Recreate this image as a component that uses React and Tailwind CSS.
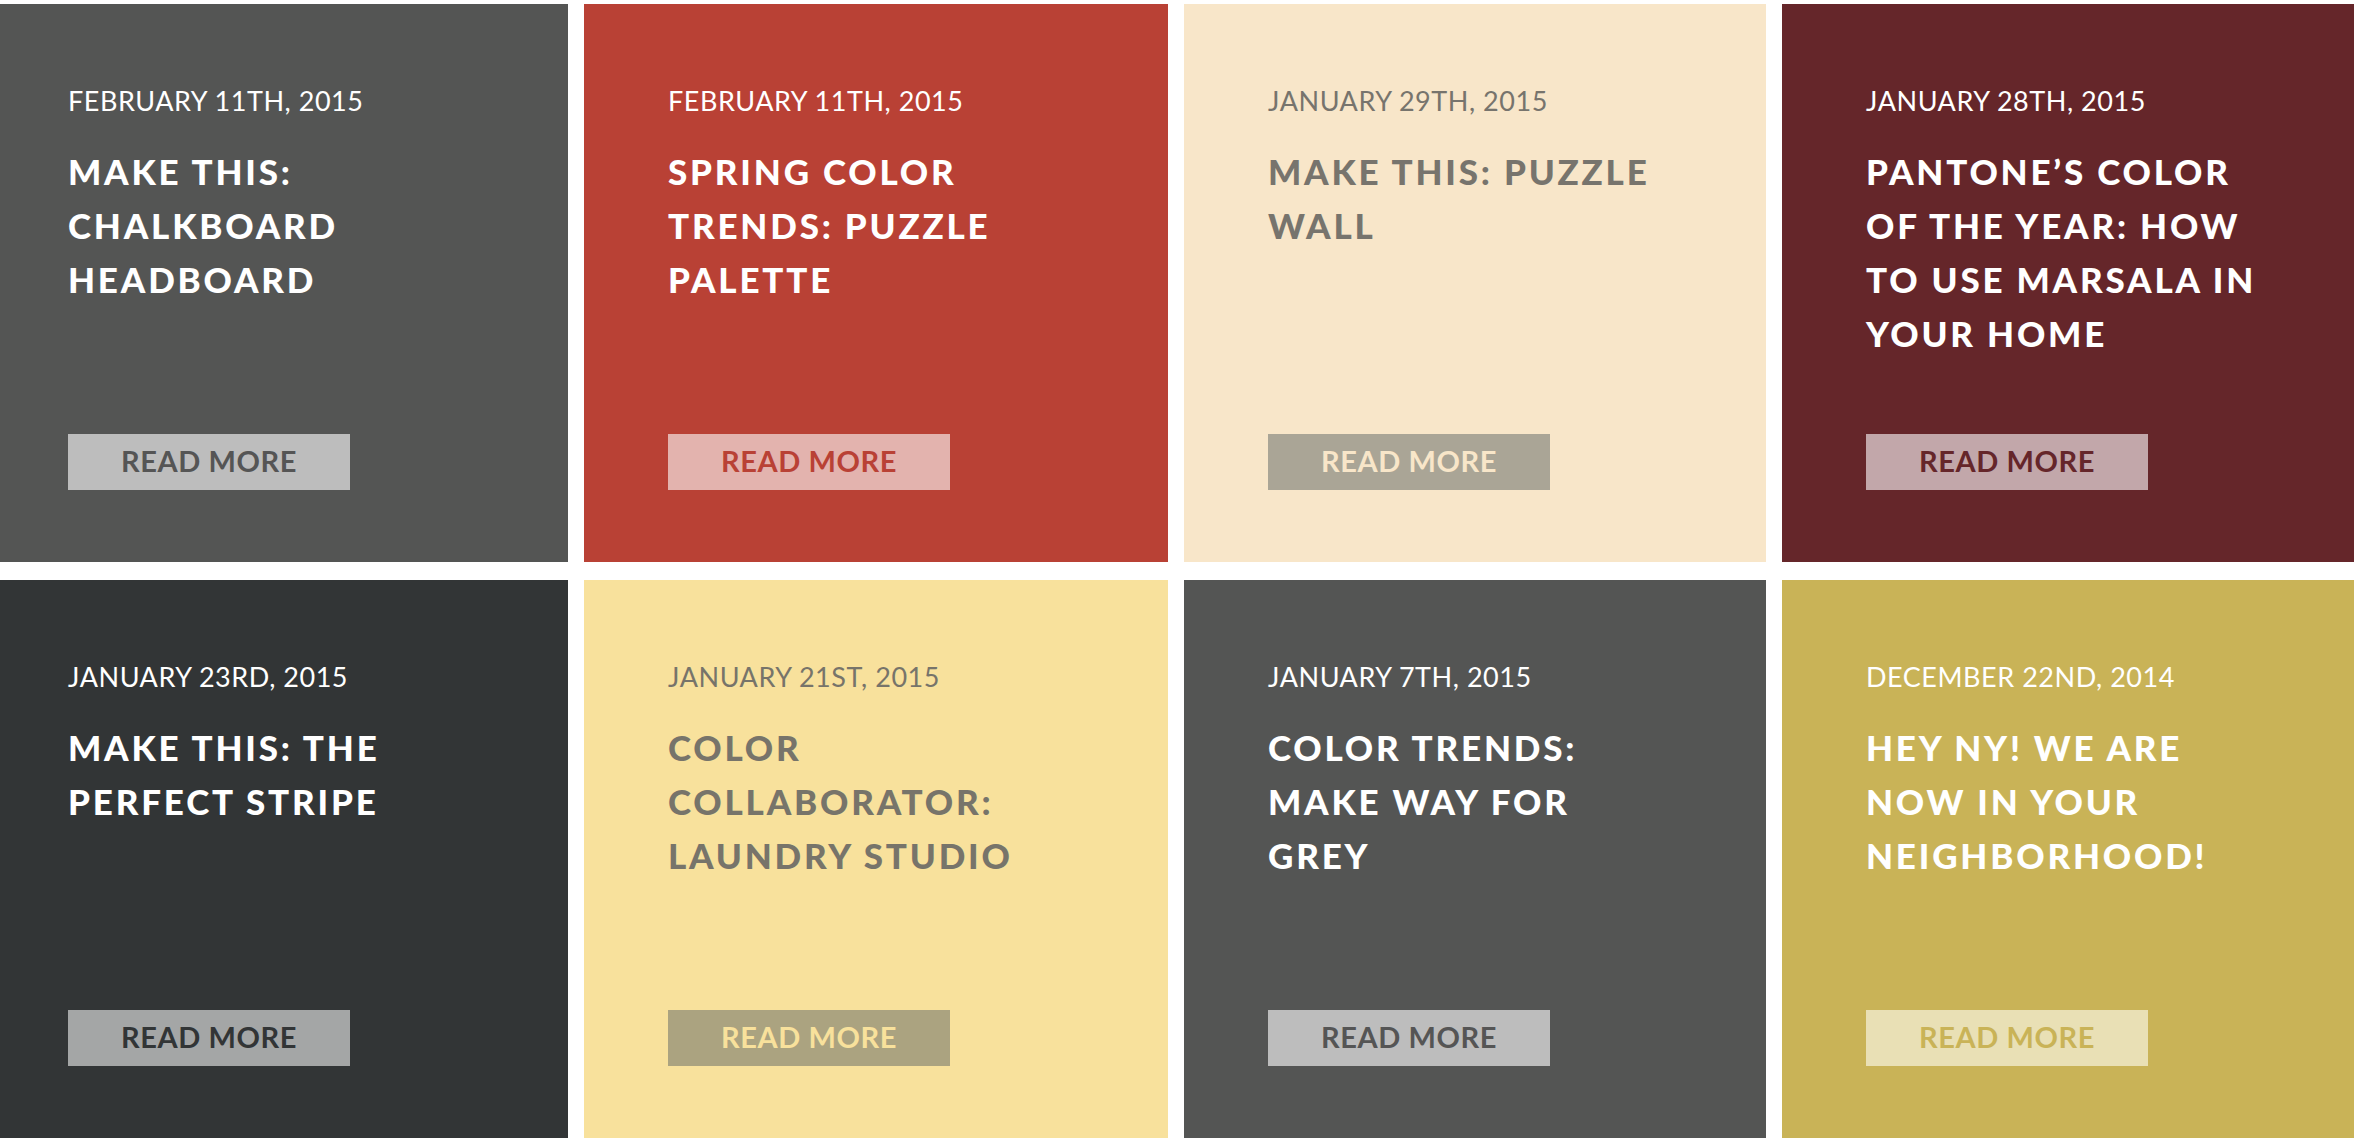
import React from 'react';

const posts = [
  {
    date: 'February 11th, 2015',
    title: 'Make this: Chalkboard Headboard',
    card: 'bg-[#545554]',
    text: 'text-white',
    button: 'bg-[#bdbdbd] text-[#555555]',
  },
  {
    date: 'February 11th, 2015',
    title: 'Spring Color Trends: Puzzle Palette',
    card: 'bg-[#b94135]',
    text: 'text-white',
    button: 'bg-[#e3b3ae] text-[#b94135]',
  },
  {
    date: 'January 29th, 2015',
    title: 'Make this: Puzzle Wall',
    card: 'bg-[#f8e6c9]',
    text: 'text-[#77746d]',
    button: 'bg-[#aaa596] text-[#f8e6c9]',
  },
  {
    date: 'January 28th, 2015',
    title: 'Pantone’s Color of the Year: How to use Marsala in your home',
    card: 'bg-[#65262a]',
    text: 'text-white',
    button: 'bg-[#c2a7aa] text-[#65262a]',
  },
  {
    date: 'January 23rd, 2015',
    title: 'Make this: The Perfect Stripe',
    card: 'bg-[#323536]',
    text: 'text-white',
    button: 'bg-[#a4a6a6] text-[#323536]',
  },
  {
    date: 'January 21st, 2015',
    title: 'Color Collaborator: Laundry Studio',
    card: 'bg-[#f8e19c]',
    text: 'text-[#77746a]',
    button: 'bg-[#aba380] text-[#f8e19c]',
  },
  {
    date: 'January 7th, 2015',
    title: 'Color Trends: Make Way for Grey',
    card: 'bg-[#545554]',
    text: 'text-white',
    button: 'bg-[#bdbdbd] text-[#555555]',
  },
  {
    date: 'December 22nd, 2014',
    title: 'Hey NY! We are now in your neighborhood!',
    card: 'bg-[#c9b357]',
    text: 'text-white',
    button: 'bg-[#e9e0b5] text-[#c9b357]',
  },
];

const PostCard = ({ post }) => (
  <article className={`flex h-[558px] flex-col pl-[84px] pr-[40px] pt-[81px] pb-[72px] ${post.card}`}>
    <p className={`text-[27px] leading-[1.2] font-normal uppercase tracking-[0.02em] ${post.text}`}>{post.date}</p>
    <h2 className={`mt-[27px] max-w-[410px] text-[35px] leading-[54px] font-black uppercase tracking-[0.08em] ${post.text}`}>
      {post.title}
    </h2>
    <a
      href="#"
      className={`mt-auto flex h-[56px] w-[282px] shrink-0 items-center justify-center pb-[2px] text-[29px] font-bold uppercase tracking-[0.02em] ${post.button}`}
    >
      Read More
    </a>
  </article>
);

export default function App() {
  return (
    <div className="min-h-[1142px] overflow-hidden bg-white pt-1" style={{ fontFamily: 'Lato, "Open Sans", sans-serif' }}>
      <div className="-ml-4 grid w-[2386px] grid-cols-[584px_584px_582px_588px] gap-x-4 gap-y-[18px]">
        {posts.map((post, i) => (
          <PostCard key={i} post={post} />
        ))}
      </div>
    </div>
  );
}
